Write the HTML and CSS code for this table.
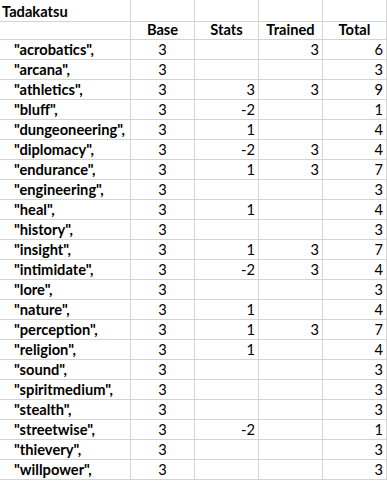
FILE: index.html
```html
<!DOCTYPE html>
<html>
<head>
<meta charset="utf-8">
<link rel="stylesheet" href="styles.css">
</head>
<body>
<div class="sheet">
  <div class="c title b">Tadakatsu</div><div class="c title"></div><div class="c title"></div><div class="c title"></div><div class="c title"></div>
  <div class="c"></div><div class="c b ctr">Base</div><div class="c b ctr">Stats</div><div class="c b ctr">Trained</div><div class="c b ctr">Total</div>

  <div class="c name">"acrobatics",</div><div class="c ctr">3</div><div class="c num"></div><div class="c num">3</div><div class="c num">6</div>
  <div class="c name">"arcana",</div><div class="c ctr">3</div><div class="c num"></div><div class="c num"></div><div class="c num">3</div>
  <div class="c name">"athletics",</div><div class="c ctr">3</div><div class="c num">3</div><div class="c num">3</div><div class="c num">9</div>
  <div class="c name">"bluff",</div><div class="c ctr">3</div><div class="c num">-2</div><div class="c num"></div><div class="c num">1</div>
  <div class="c name">"dungeoneering",</div><div class="c ctr">3</div><div class="c num">1</div><div class="c num"></div><div class="c num">4</div>
  <div class="c name">"diplomacy",</div><div class="c ctr">3</div><div class="c num">-2</div><div class="c num">3</div><div class="c num">4</div>
  <div class="c name">"endurance",</div><div class="c ctr">3</div><div class="c num">1</div><div class="c num">3</div><div class="c num">7</div>
  <div class="c name">"engineering",</div><div class="c ctr">3</div><div class="c num"></div><div class="c num"></div><div class="c num">3</div>
  <div class="c name">"heal",</div><div class="c ctr">3</div><div class="c num">1</div><div class="c num"></div><div class="c num">4</div>
  <div class="c name">"history",</div><div class="c ctr">3</div><div class="c num"></div><div class="c num"></div><div class="c num">3</div>
  <div class="c name">"insight",</div><div class="c ctr">3</div><div class="c num">1</div><div class="c num">3</div><div class="c num">7</div>
  <div class="c name">"intimidate",</div><div class="c ctr">3</div><div class="c num">-2</div><div class="c num">3</div><div class="c num">4</div>
  <div class="c name">"lore",</div><div class="c ctr">3</div><div class="c num"></div><div class="c num"></div><div class="c num">3</div>
  <div class="c name">"nature",</div><div class="c ctr">3</div><div class="c num">1</div><div class="c num"></div><div class="c num">4</div>
  <div class="c name">"perception",</div><div class="c ctr">3</div><div class="c num">1</div><div class="c num">3</div><div class="c num">7</div>
  <div class="c name">"religion",</div><div class="c ctr">3</div><div class="c num">1</div><div class="c num"></div><div class="c num">4</div>
  <div class="c name">"sound",</div><div class="c ctr">3</div><div class="c num"></div><div class="c num"></div><div class="c num">3</div>
  <div class="c name">"spiritmedium",</div><div class="c ctr">3</div><div class="c num"></div><div class="c num"></div><div class="c num">3</div>
  <div class="c name">"stealth",</div><div class="c ctr">3</div><div class="c num"></div><div class="c num"></div><div class="c num">3</div>
  <div class="c name">"streetwise",</div><div class="c ctr">3</div><div class="c num">-2</div><div class="c num"></div><div class="c num">1</div>
  <div class="c name">"thievery",</div><div class="c ctr">3</div><div class="c num"></div><div class="c num"></div><div class="c num">3</div>
  <div class="c name">"willpower",</div><div class="c ctr">3</div><div class="c num"></div><div class="c num"></div><div class="c num">3</div>
</div>
</body>
</html>
```
FILE: styles.css
```css
html, body {
  margin: 0;
  padding: 0;
  background: #ffffff;
}
.sheet {
  display: grid;
  grid-template-columns: 131px 64px 64px 64px 64px;
  grid-auto-rows: 20px;
  font-family: Lato, "Noto Sans", sans-serif;
  font-size: 14.67px;
  color: #000000;
}
.c {
  box-sizing: border-box;
  border-right: 1px solid #d4d4d4;
  border-bottom: 1px solid #d4d4d4;
  line-height: 19px;
  white-space: nowrap;
  overflow: visible;
}
.title {
  height: 22px;
  padding-top: 2px;
}
.b {
  font-weight: bold;
}
.title.b {
  padding-left: 2px;
}
.ctr {
  text-align: center;
}
.num {
  text-align: right;
  padding-right: 3px;
}
.name {
  padding-left: 14px;
  font-weight: bold;
}
```
